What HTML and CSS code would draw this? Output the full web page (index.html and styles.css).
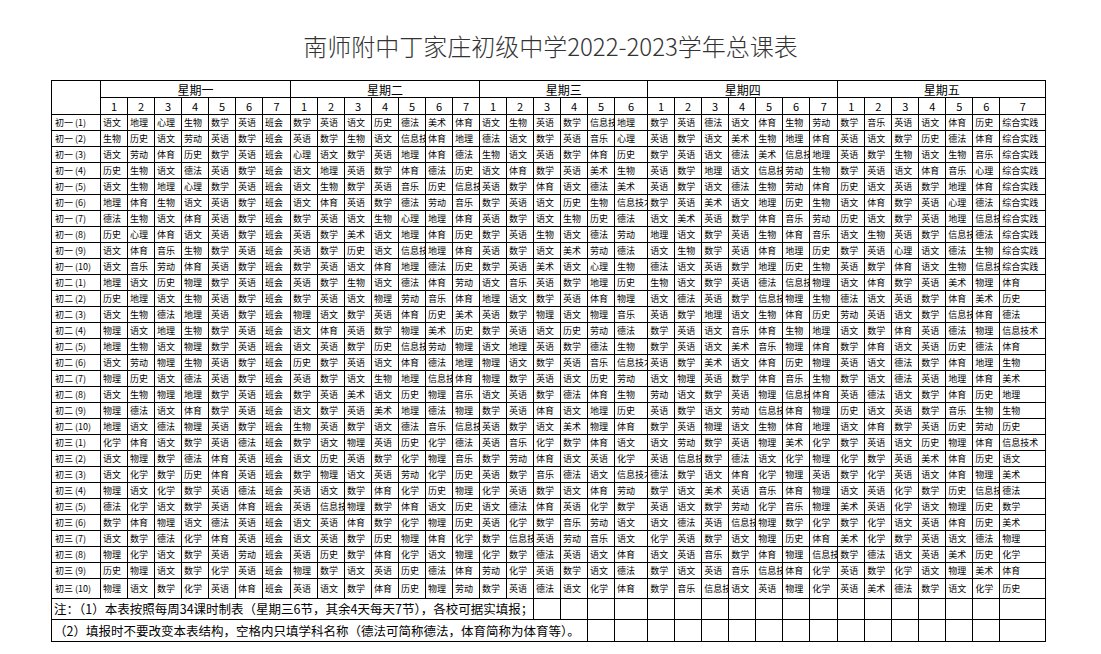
FILE: index.html
```html
<!DOCTYPE html>
<html lang="zh-CN">
<head>
<meta charset="utf-8">
<title>总课表</title>
<link rel="stylesheet" href="styles.css">
</head>
<body>
<h1 class="title">南师附中丁家庄初级中学2022-2023学年总课表</h1>
<table class="grid">
<colgroup>
<col class="w49">
<col class="w27"><col class="w27"><col class="w27"><col class="w27"><col class="w27"><col class="w27"><col class="w28">
<col class="w27"><col class="w27"><col class="w27"><col class="w27"><col class="w27"><col class="w27"><col class="w27">
<col class="w27"><col class="w27"><col class="w27"><col class="w27"><col class="w27"><col class="w33">
<col class="w27"><col class="w27"><col class="w27"><col class="w27"><col class="w27"><col class="w27"><col class="w28">
<col class="w27"><col class="w27"><col class="w27"><col class="w27"><col class="w27"><col class="w27"><col class="w46">
</colgroup>
<tr class="h"><td rowspan="2"></td><td colspan="7" class="d">星期一</td><td colspan="7" class="d">星期二</td><td colspan="6" class="d">星期三</td><td colspan="7" class="d">星期四</td><td colspan="7" class="d">星期五</td></tr>
<tr class="h"><td class="n">1</td><td class="n">2</td><td class="n">3</td><td class="n">4</td><td class="n">5</td><td class="n">6</td><td class="n">7</td><td class="n">1</td><td class="n">2</td><td class="n">3</td><td class="n">4</td><td class="n">5</td><td class="n">6</td><td class="n">7</td><td class="n">1</td><td class="n">2</td><td class="n">3</td><td class="n">4</td><td class="n">5</td><td class="n">6</td><td class="n">1</td><td class="n">2</td><td class="n">3</td><td class="n">4</td><td class="n">5</td><td class="n">6</td><td class="n">7</td><td class="n">1</td><td class="n">2</td><td class="n">3</td><td class="n">4</td><td class="n">5</td><td class="n">6</td><td class="n">7</td></tr>
<tr class="r"><td class="lb">初一 (1)</td><td>语文</td><td>地理</td><td>心理</td><td>生物</td><td>数学</td><td>英语</td><td>班会</td><td>数学</td><td>英语</td><td>语文</td><td>历史</td><td>德法</td><td>美术</td><td>体育</td><td>语文</td><td>生物</td><td>英语</td><td>数学</td><td>信息技术</td><td>地理</td><td>数学</td><td>英语</td><td>德法</td><td>语文</td><td>体育</td><td>生物</td><td>劳动</td><td>数学</td><td>音乐</td><td>英语</td><td>语文</td><td>体育</td><td>历史</td><td>综合实践</td></tr>
<tr class="r"><td class="lb">初一 (2)</td><td>生物</td><td>历史</td><td>语文</td><td>劳动</td><td>英语</td><td>数学</td><td>班会</td><td>英语</td><td>数学</td><td>生物</td><td>语文</td><td>信息技术</td><td>体育</td><td>地理</td><td>德法</td><td>语文</td><td>数学</td><td>英语</td><td>音乐</td><td>心理</td><td>英语</td><td>数学</td><td>语文</td><td>美术</td><td>生物</td><td>地理</td><td>体育</td><td>英语</td><td>语文</td><td>数学</td><td>历史</td><td>德法</td><td>体育</td><td>综合实践</td></tr>
<tr class="r"><td class="lb">初一 (3)</td><td>语文</td><td>劳动</td><td>体育</td><td>历史</td><td>数学</td><td>英语</td><td>班会</td><td>心理</td><td>语文</td><td>数学</td><td>英语</td><td>地理</td><td>体育</td><td>德法</td><td>生物</td><td>语文</td><td>英语</td><td>数学</td><td>体育</td><td>历史</td><td>数学</td><td>英语</td><td>语文</td><td>德法</td><td>美术</td><td>信息技术</td><td>地理</td><td>英语</td><td>数学</td><td>生物</td><td>语文</td><td>生物</td><td>音乐</td><td>综合实践</td></tr>
<tr class="r"><td class="lb">初一 (4)</td><td>历史</td><td>生物</td><td>语文</td><td>德法</td><td>英语</td><td>数学</td><td>班会</td><td>语文</td><td>地理</td><td>英语</td><td>数学</td><td>体育</td><td>德法</td><td>历史</td><td>语文</td><td>体育</td><td>数学</td><td>英语</td><td>美术</td><td>生物</td><td>英语</td><td>数学</td><td>地理</td><td>语文</td><td>信息技术</td><td>劳动</td><td>生物</td><td>数学</td><td>英语</td><td>语文</td><td>体育</td><td>音乐</td><td>心理</td><td>综合实践</td></tr>
<tr class="r"><td class="lb">初一 (5)</td><td>语文</td><td>生物</td><td>地理</td><td>心理</td><td>数学</td><td>英语</td><td>班会</td><td>语文</td><td>生物</td><td>数学</td><td>英语</td><td>音乐</td><td>历史</td><td>信息技术</td><td>英语</td><td>数学</td><td>体育</td><td>语文</td><td>德法</td><td>美术</td><td>英语</td><td>数学</td><td>语文</td><td>德法</td><td>生物</td><td>劳动</td><td>体育</td><td>历史</td><td>语文</td><td>英语</td><td>数学</td><td>地理</td><td>体育</td><td>综合实践</td></tr>
<tr class="r"><td class="lb">初一 (6)</td><td>地理</td><td>体育</td><td>生物</td><td>语文</td><td>英语</td><td>数学</td><td>班会</td><td>语文</td><td>体育</td><td>英语</td><td>数学</td><td>德法</td><td>劳动</td><td>音乐</td><td>数学</td><td>英语</td><td>语文</td><td>历史</td><td>生物</td><td>信息技术</td><td>数学</td><td>英语</td><td>美术</td><td>语文</td><td>地理</td><td>历史</td><td>生物</td><td>语文</td><td>体育</td><td>数学</td><td>英语</td><td>心理</td><td>德法</td><td>综合实践</td></tr>
<tr class="r"><td class="lb">初一 (7)</td><td>德法</td><td>生物</td><td>语文</td><td>体育</td><td>英语</td><td>数学</td><td>班会</td><td>数学</td><td>英语</td><td>语文</td><td>生物</td><td>心理</td><td>地理</td><td>体育</td><td>英语</td><td>数学</td><td>语文</td><td>生物</td><td>历史</td><td>德法</td><td>语文</td><td>美术</td><td>英语</td><td>数学</td><td>体育</td><td>音乐</td><td>劳动</td><td>历史</td><td>语文</td><td>数学</td><td>英语</td><td>地理</td><td>信息技术</td><td>综合实践</td></tr>
<tr class="r"><td class="lb">初一 (8)</td><td>历史</td><td>心理</td><td>体育</td><td>语文</td><td>英语</td><td>数学</td><td>班会</td><td>英语</td><td>数学</td><td>美术</td><td>语文</td><td>地理</td><td>体育</td><td>历史</td><td>数学</td><td>英语</td><td>生物</td><td>语文</td><td>德法</td><td>劳动</td><td>地理</td><td>语文</td><td>数学</td><td>英语</td><td>生物</td><td>体育</td><td>音乐</td><td>语文</td><td>生物</td><td>英语</td><td>数学</td><td>信息技术</td><td>德法</td><td>综合实践</td></tr>
<tr class="r"><td class="lb">初一 (9)</td><td>语文</td><td>体育</td><td>音乐</td><td>生物</td><td>数学</td><td>英语</td><td>班会</td><td>英语</td><td>数学</td><td>历史</td><td>语文</td><td>信息技术</td><td>地理</td><td>体育</td><td>英语</td><td>数学</td><td>语文</td><td>美术</td><td>劳动</td><td>德法</td><td>语文</td><td>生物</td><td>数学</td><td>英语</td><td>体育</td><td>地理</td><td>历史</td><td>数学</td><td>英语</td><td>心理</td><td>语文</td><td>德法</td><td>生物</td><td>综合实践</td></tr>
<tr class="r"><td class="lb">初一 (10)</td><td>语文</td><td>音乐</td><td>劳动</td><td>体育</td><td>英语</td><td>数学</td><td>班会</td><td>数学</td><td>英语</td><td>语文</td><td>体育</td><td>地理</td><td>德法</td><td>历史</td><td>数学</td><td>英语</td><td>美术</td><td>语文</td><td>心理</td><td>生物</td><td>德法</td><td>语文</td><td>英语</td><td>数学</td><td>地理</td><td>历史</td><td>生物</td><td>英语</td><td>数学</td><td>体育</td><td>语文</td><td>生物</td><td>信息技术</td><td>综合实践</td></tr>
<tr class="r"><td class="lb">初二 (1)</td><td>地理</td><td>语文</td><td>历史</td><td>物理</td><td>数学</td><td>英语</td><td>班会</td><td>英语</td><td>数学</td><td>生物</td><td>语文</td><td>德法</td><td>体育</td><td>劳动</td><td>语文</td><td>音乐</td><td>英语</td><td>数学</td><td>地理</td><td>历史</td><td>生物</td><td>语文</td><td>数学</td><td>英语</td><td>德法</td><td>信息技术</td><td>物理</td><td>语文</td><td>体育</td><td>数学</td><td>英语</td><td>美术</td><td>物理</td><td>体育</td></tr>
<tr class="r"><td class="lb">初二 (2)</td><td>历史</td><td>地理</td><td>语文</td><td>生物</td><td>英语</td><td>数学</td><td>班会</td><td>数学</td><td>英语</td><td>语文</td><td>物理</td><td>劳动</td><td>音乐</td><td>体育</td><td>地理</td><td>语文</td><td>数学</td><td>英语</td><td>体育</td><td>物理</td><td>语文</td><td>德法</td><td>英语</td><td>数学</td><td>信息技术</td><td>物理</td><td>生物</td><td>德法</td><td>语文</td><td>英语</td><td>数学</td><td>体育</td><td>美术</td><td>历史</td></tr>
<tr class="r"><td class="lb">初二 (3)</td><td>语文</td><td>生物</td><td>德法</td><td>地理</td><td>英语</td><td>数学</td><td>班会</td><td>物理</td><td>语文</td><td>数学</td><td>英语</td><td>体育</td><td>历史</td><td>美术</td><td>英语</td><td>数学</td><td>物理</td><td>语文</td><td>物理</td><td>音乐</td><td>英语</td><td>数学</td><td>地理</td><td>语文</td><td>生物</td><td>体育</td><td>历史</td><td>劳动</td><td>英语</td><td>语文</td><td>数学</td><td>信息技术</td><td>体育</td><td>德法</td></tr>
<tr class="r"><td class="lb">初二 (4)</td><td>物理</td><td>语文</td><td>地理</td><td>生物</td><td>数学</td><td>英语</td><td>班会</td><td>语文</td><td>体育</td><td>英语</td><td>数学</td><td>物理</td><td>美术</td><td>历史</td><td>数学</td><td>英语</td><td>语文</td><td>历史</td><td>劳动</td><td>德法</td><td>数学</td><td>英语</td><td>语文</td><td>音乐</td><td>体育</td><td>生物</td><td>地理</td><td>语文</td><td>数学</td><td>体育</td><td>英语</td><td>德法</td><td>物理</td><td>信息技术</td></tr>
<tr class="r"><td class="lb">初二 (5)</td><td>地理</td><td>生物</td><td>语文</td><td>物理</td><td>数学</td><td>英语</td><td>班会</td><td>语文</td><td>英语</td><td>数学</td><td>历史</td><td>信息技术</td><td>劳动</td><td>物理</td><td>语文</td><td>地理</td><td>英语</td><td>数学</td><td>德法</td><td>生物</td><td>数学</td><td>英语</td><td>语文</td><td>美术</td><td>音乐</td><td>物理</td><td>体育</td><td>数学</td><td>体育</td><td>语文</td><td>英语</td><td>历史</td><td>德法</td><td>体育</td></tr>
<tr class="r"><td class="lb">初二 (6)</td><td>语文</td><td>劳动</td><td>物理</td><td>生物</td><td>英语</td><td>数学</td><td>班会</td><td>历史</td><td>数学</td><td>英语</td><td>语文</td><td>体育</td><td>德法</td><td>地理</td><td>物理</td><td>语文</td><td>数学</td><td>英语</td><td>音乐</td><td>信息技术</td><td>英语</td><td>数学</td><td>美术</td><td>语文</td><td>体育</td><td>历史</td><td>物理</td><td>英语</td><td>语文</td><td>德法</td><td>数学</td><td>体育</td><td>地理</td><td>生物</td></tr>
<tr class="r"><td class="lb">初二 (7)</td><td>物理</td><td>历史</td><td>语文</td><td>德法</td><td>英语</td><td>数学</td><td>班会</td><td>英语</td><td>数学</td><td>语文</td><td>生物</td><td>地理</td><td>信息技术</td><td>体育</td><td>物理</td><td>数学</td><td>英语</td><td>语文</td><td>历史</td><td>劳动</td><td>语文</td><td>物理</td><td>英语</td><td>数学</td><td>体育</td><td>音乐</td><td>生物</td><td>数学</td><td>语文</td><td>德法</td><td>英语</td><td>地理</td><td>体育</td><td>美术</td></tr>
<tr class="r"><td class="lb">初二 (8)</td><td>语文</td><td>生物</td><td>物理</td><td>地理</td><td>数学</td><td>英语</td><td>班会</td><td>数学</td><td>英语</td><td>美术</td><td>语文</td><td>历史</td><td>物理</td><td>音乐</td><td>语文</td><td>英语</td><td>数学</td><td>德法</td><td>体育</td><td>生物</td><td>劳动</td><td>语文</td><td>数学</td><td>英语</td><td>物理</td><td>信息技术</td><td>体育</td><td>英语</td><td>德法</td><td>语文</td><td>数学</td><td>体育</td><td>历史</td><td>地理</td></tr>
<tr class="r"><td class="lb">初二 (9)</td><td>物理</td><td>德法</td><td>语文</td><td>体育</td><td>数学</td><td>英语</td><td>班会</td><td>语文</td><td>数学</td><td>英语</td><td>美术</td><td>地理</td><td>德法</td><td>物理</td><td>数学</td><td>英语</td><td>体育</td><td>语文</td><td>地理</td><td>历史</td><td>英语</td><td>数学</td><td>语文</td><td>劳动</td><td>信息技术</td><td>体育</td><td>物理</td><td>历史</td><td>语文</td><td>英语</td><td>数学</td><td>音乐</td><td>生物</td><td>生物</td></tr>
<tr class="r"><td class="lb">初二 (10)</td><td>地理</td><td>语文</td><td>德法</td><td>物理</td><td>英语</td><td>数学</td><td>班会</td><td>生物</td><td>英语</td><td>数学</td><td>语文</td><td>德法</td><td>音乐</td><td>信息技术</td><td>英语</td><td>数学</td><td>语文</td><td>美术</td><td>物理</td><td>体育</td><td>数学</td><td>英语</td><td>物理</td><td>语文</td><td>生物</td><td>体育</td><td>地理</td><td>语文</td><td>体育</td><td>数学</td><td>英语</td><td>历史</td><td>劳动</td><td>历史</td></tr>
<tr class="r"><td class="lb">初三 (1)</td><td>化学</td><td>体育</td><td>语文</td><td>数学</td><td>英语</td><td>德法</td><td>班会</td><td>数学</td><td>语文</td><td>物理</td><td>英语</td><td>历史</td><td>化学</td><td>德法</td><td>英语</td><td>音乐</td><td>化学</td><td>数学</td><td>体育</td><td>语文</td><td>语文</td><td>劳动</td><td>数学</td><td>英语</td><td>物理</td><td>美术</td><td>化学</td><td>数学</td><td>英语</td><td>语文</td><td>历史</td><td>物理</td><td>体育</td><td>信息技术</td></tr>
<tr class="r"><td class="lb">初三 (2)</td><td>语文</td><td>物理</td><td>数学</td><td>德法</td><td>体育</td><td>英语</td><td>班会</td><td>语文</td><td>历史</td><td>英语</td><td>数学</td><td>化学</td><td>物理</td><td>音乐</td><td>数学</td><td>劳动</td><td>体育</td><td>语文</td><td>英语</td><td>化学</td><td>英语</td><td>信息技术</td><td>数学</td><td>德法</td><td>语文</td><td>化学</td><td>物理</td><td>化学</td><td>数学</td><td>英语</td><td>美术</td><td>体育</td><td>历史</td><td>语文</td></tr>
<tr class="r"><td class="lb">初三 (3)</td><td>语文</td><td>化学</td><td>数学</td><td>历史</td><td>体育</td><td>英语</td><td>班会</td><td>数学</td><td>物理</td><td>语文</td><td>英语</td><td>劳动</td><td>化学</td><td>历史</td><td>英语</td><td>数学</td><td>音乐</td><td>德法</td><td>语文</td><td>信息技术</td><td>德法</td><td>数学</td><td>语文</td><td>体育</td><td>化学</td><td>物理</td><td>英语</td><td>数学</td><td>化学</td><td>英语</td><td>语文</td><td>体育</td><td>物理</td><td>美术</td></tr>
<tr class="r"><td class="lb">初三 (4)</td><td>物理</td><td>语文</td><td>化学</td><td>数学</td><td>英语</td><td>德法</td><td>班会</td><td>英语</td><td>语文</td><td>数学</td><td>体育</td><td>化学</td><td>历史</td><td>物理</td><td>化学</td><td>英语</td><td>数学</td><td>语文</td><td>体育</td><td>劳动</td><td>数学</td><td>语文</td><td>美术</td><td>英语</td><td>音乐</td><td>体育</td><td>物理</td><td>语文</td><td>英语</td><td>化学</td><td>数学</td><td>历史</td><td>信息技术</td><td>德法</td></tr>
<tr class="r"><td class="lb">初三 (5)</td><td>德法</td><td>化学</td><td>语文</td><td>数学</td><td>英语</td><td>体育</td><td>班会</td><td>英语</td><td>信息技术</td><td>物理</td><td>数学</td><td>体育</td><td>语文</td><td>历史</td><td>语文</td><td>德法</td><td>体育</td><td>英语</td><td>化学</td><td>数学</td><td>英语</td><td>语文</td><td>数学</td><td>劳动</td><td>化学</td><td>音乐</td><td>物理</td><td>美术</td><td>英语</td><td>化学</td><td>语文</td><td>物理</td><td>历史</td><td>数学</td></tr>
<tr class="r"><td class="lb">初三 (6)</td><td>数学</td><td>体育</td><td>物理</td><td>语文</td><td>德法</td><td>英语</td><td>班会</td><td>语文</td><td>英语</td><td>体育</td><td>数学</td><td>化学</td><td>物理</td><td>历史</td><td>英语</td><td>化学</td><td>数学</td><td>音乐</td><td>劳动</td><td>语文</td><td>语文</td><td>德法</td><td>英语</td><td>信息技术</td><td>物理</td><td>数学</td><td>化学</td><td>数学</td><td>化学</td><td>语文</td><td>英语</td><td>体育</td><td>历史</td><td>美术</td></tr>
<tr class="r"><td class="lb">初三 (7)</td><td>语文</td><td>数学</td><td>德法</td><td>化学</td><td>体育</td><td>英语</td><td>班会</td><td>语文</td><td>英语</td><td>数学</td><td>历史</td><td>物理</td><td>体育</td><td>化学</td><td>数学</td><td>信息技术</td><td>英语</td><td>劳动</td><td>音乐</td><td>语文</td><td>化学</td><td>英语</td><td>数学</td><td>语文</td><td>物理</td><td>历史</td><td>体育</td><td>美术</td><td>化学</td><td>数学</td><td>英语</td><td>语文</td><td>德法</td><td>物理</td></tr>
<tr class="r"><td class="lb">初三 (8)</td><td>物理</td><td>化学</td><td>语文</td><td>数学</td><td>英语</td><td>劳动</td><td>班会</td><td>英语</td><td>历史</td><td>数学</td><td>体育</td><td>化学</td><td>语文</td><td>物理</td><td>化学</td><td>数学</td><td>德法</td><td>英语</td><td>语文</td><td>体育</td><td>语文</td><td>英语</td><td>音乐</td><td>数学</td><td>体育</td><td>物理</td><td>信息技术</td><td>数学</td><td>德法</td><td>语文</td><td>英语</td><td>美术</td><td>历史</td><td>化学</td></tr>
<tr class="r"><td class="lb">初三 (9)</td><td>历史</td><td>物理</td><td>语文</td><td>数学</td><td>化学</td><td>英语</td><td>班会</td><td>物理</td><td>数学</td><td>语文</td><td>英语</td><td>历史</td><td>德法</td><td>体育</td><td>劳动</td><td>化学</td><td>英语</td><td>数学</td><td>语文</td><td>德法</td><td>数学</td><td>语文</td><td>英语</td><td>音乐</td><td>信息技术</td><td>体育</td><td>化学</td><td>英语</td><td>数学</td><td>化学</td><td>语文</td><td>物理</td><td>美术</td><td>体育</td></tr>
<tr class="rl"><td class="lb">初三 (10)</td><td>物理</td><td>语文</td><td>数学</td><td>化学</td><td>英语</td><td>体育</td><td>班会</td><td>英语</td><td>语文</td><td>数学</td><td>体育</td><td>历史</td><td>物理</td><td>劳动</td><td>数学</td><td>英语</td><td>德法</td><td>语文</td><td>化学</td><td>体育</td><td>数学</td><td>音乐</td><td>信息技术</td><td>语文</td><td>英语</td><td>物理</td><td>化学</td><td>英语</td><td>美术</td><td>德法</td><td>数学</td><td>语文</td><td>化学</td><td>历史</td></tr>
<tr class="nt1"><td colspan="17" class="note">注：（1）本表按照每周34课时制表（星期三6节，其余4天每天7节），各校可据实填报；</td><td></td><td></td><td></td><td></td><td></td><td></td><td></td><td></td><td></td><td></td><td></td><td></td><td></td><td></td><td></td><td></td><td></td><td></td></tr>
<tr class="nt2"><td colspan="19" class="note">（2）填报时不要改变本表结构，空格内只填学科名称（德法可简称德法，体育简称为体育等）。</td><td></td><td></td><td></td><td></td><td></td><td></td><td></td><td></td><td></td><td></td><td></td><td></td><td></td><td></td><td></td><td></td></tr>
</table>
</body>
</html>
```

FILE: styles.css
```css
html, body {
  margin: 0;
  padding: 0;
  background: #ffffff;
}

body {
  font-family: "Noto Sans CJK SC", "Noto Sans", sans-serif;
  color: #000;
}

.title {
  margin: 0;
  height: 80px;
  box-sizing: border-box;
  padding-top: 31px;
  font-size: 24px;
  line-height: 30px;
  font-weight: 300;
  text-align: center;
  color: #333;
}

.grid {
  margin-left: 51px;
  width: 994px;
  border-collapse: collapse;
  table-layout: fixed;
}

.w27 { width: 27px; }
.w28 { width: 28px; }
.w33 { width: 33px; }
.w46 { width: 46px; }
.w49 { width: 49px; }

.grid td {
  border: 1px solid #000;
  padding: 0 0 0 2px;
  font-size: 9px;
  line-height: 10px;
  white-space: nowrap;
  overflow: hidden;
  text-overflow: clip;
  vertical-align: middle;
}

.grid tr.h { height: 17px; }
.grid tr.r { height: 16px; }
.grid tr.rl { height: 20px; }
.grid tr.nt1 { height: 21px; }
.grid tr.nt2 { height: 22px; }

.grid td.d {
  text-align: center;
  font-size: 12px;
  line-height: 13px;
  padding: 0;
}

.grid td.n {
  text-align: center;
  font-size: 11px;
  line-height: 12px;
  padding: 0;
}

.grid td.lb {
  padding-left: 3px;
}

.grid td.note {
  font-size: 12.5px;
  line-height: 14px;
  padding-left: 2px;
}
```
